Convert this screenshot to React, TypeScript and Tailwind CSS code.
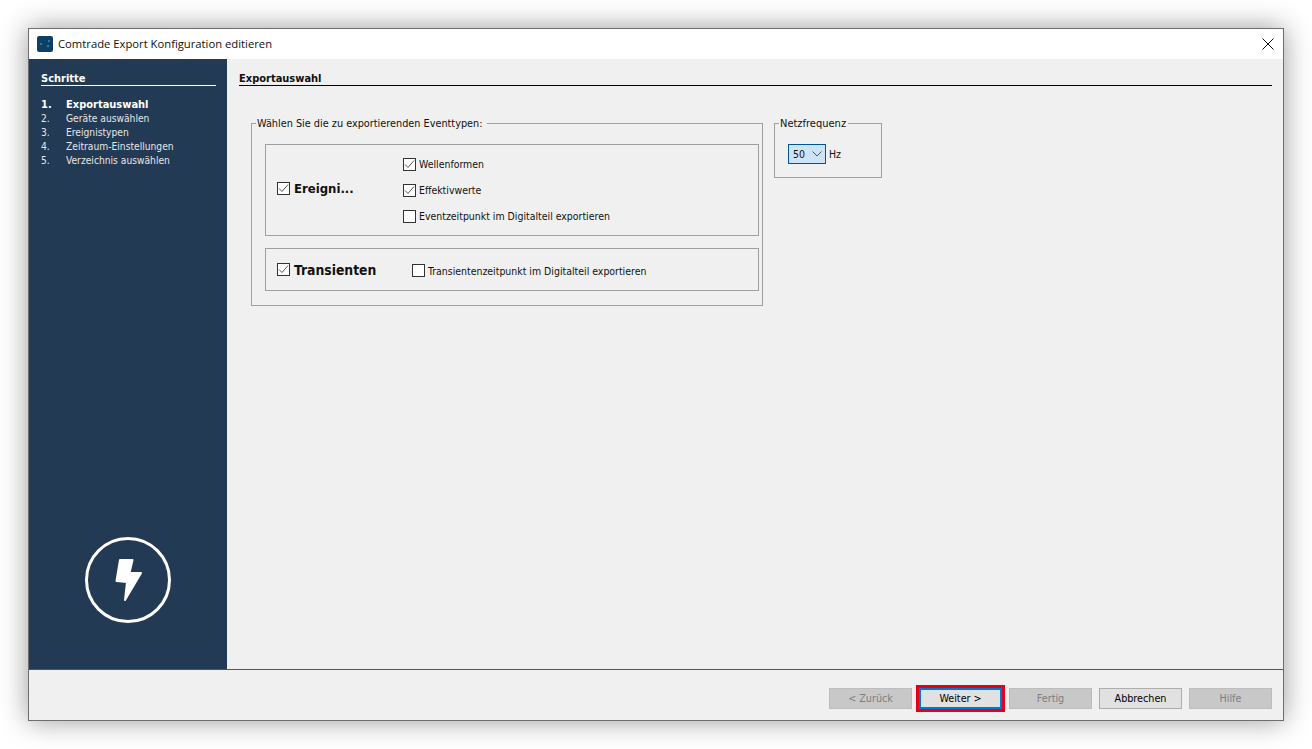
const Check = ({ checked, className = "" }: { checked?: boolean; className?: string }) => (
  <span className={"flex h-[13px] w-[13px] shrink-0 items-center justify-center border border-[#333] bg-white " + className}>
    {checked && (
      <svg width="11" height="11" viewBox="0 0 11 11" fill="none">
        <path d="M1 5.5 L4 8.5 L10 1.5" stroke="#555" strokeWidth="1" />
      </svg>
    )}
  </span>
);

const Option = ({ label, checked, className = "" }: { label: string; checked?: boolean; className?: string }) => (
  <label className={"flex h-[14px] items-center gap-[3px] " + className}>
    <Check checked={checked} />
    <span>{label}</span>
  </label>
);

const steps = ["Exportauswahl", "Geräte auswählen", "Ereignistypen", "Zeitraum-Einstellungen", "Verzeichnis auswählen"];

const NavButton = ({ label, disabled }: { label: string; disabled?: boolean }) => (
  <button
    className={
      "h-[21px] w-[83px] border " +
      (disabled ? "border-[#bdbdbd] bg-[#c8c8c8] text-[#7e7e7e]" : "border-[#adadad] bg-[#e1e1e1] text-black")
    }
  >
    {label}
  </button>
);

const App = () => {
  return (
    <div className="h-[749px] w-[1312px] overflow-hidden bg-white pl-[28px] pt-[28px] font-['DejaVu_Sans',sans-serif] text-[10.45px] leading-[14px] text-[#111] [font-stretch:condensed]">
      <div className="flex h-[693px] w-[1256px] flex-col border border-[#6e6e6e] bg-[#f0f0f0] shadow-[0_0_26px_rgba(0,0,0,0.4)]">
        <div className="flex h-[30px] shrink-0 items-center bg-white pl-[8px] pr-[9px]">
          <svg width="16" height="16" viewBox="0 0 16 16" className="mr-[5px]">
            <rect width="16" height="16" rx="2" fill="#0f3f63" />
            <circle cx="4" cy="8" r="1" fill="#2f8fc4" />
            <circle cx="12" cy="5" r="1" fill="#2f8fc4" />
            <circle cx="11" cy="10" r="1" fill="#2f8fc4" />
          </svg>
          <span className="font-['Open_Sans',sans-serif] text-[11.25px] text-[#111] [font-stretch:normal]">Comtrade Export Konfiguration editieren</span>
          <svg width="12" height="12" viewBox="0 0 12 12" className="ml-auto" fill="none">
            <path d="M0.5 0.5 L11.5 11.5 M11.5 0.5 L0.5 11.5" stroke="#111" strokeWidth="1" />
          </svg>
        </div>

        <div className="flex min-h-0 flex-1">
          <aside className="flex w-[198px] shrink-0 flex-col bg-[#233a54] pl-[12px] pr-[11px] pt-[12px] text-[10.2px] text-[#e6e6e6]">
            <div className="h-[15px] border-b border-white pt-px text-[11px] font-bold leading-[13px] text-white">Schritte</div>
            <ol className="mt-[12px]">
              {steps.map((step, i) => (
                <li key={step} className={"flex h-[14px] " + (i === 0 ? "text-[11px] font-bold text-white" : "")}>
                  <span className="w-[25px]">{i + 1}.</span>
                  <span>{step}</span>
                </li>
              ))}
            </ol>
            <svg width="88" height="88" viewBox="0 0 88 88" className="mb-[45px] ml-[43px] mt-auto" fill="none">
              <circle cx="44" cy="44" r="41.5" stroke="white" strokeWidth="3" />
              <path d="M36 24 L48.5 24 L45.5 37 L57 37 L41 64 L43 46 L32.5 45 Z" fill="white" stroke="white" strokeWidth="2" strokeLinejoin="round" />
            </svg>
          </aside>

          <main className="min-w-0 flex-1 pl-[12px] pr-[11px] pt-[12px]">
            <div className="h-[15px] border-b border-black pt-px text-[11px] font-bold leading-[13px]">Exportauswahl</div>
            <div className="ml-[12px] mt-[29px] flex items-start gap-[11px]">
              <fieldset className="h-[191px] w-[512px] border border-[#a0a0a0] pl-[13px] pr-[3px]">
                <legend className="-ml-[9px] pl-px pr-[4px] pt-[2px] text-[10.8px]">Wählen Sie die zu exportierenden Eventtypen:</legend>
                <div className="mt-[13px] flex h-[92px] items-center border border-[#a0a0a0] pl-[11px]">
                  <div className="mb-[3px] flex items-center">
                    <Check checked />
                    <span className="ml-[4px] w-[109px] text-[13px] font-bold">Ereigni...</span>
                  </div>
                  <div className="flex flex-col gap-[12px]">
                    <Option label="Wellenformen" checked />
                    <Option label="Effektivwerte" checked />
                    <Option label="Eventzeitpunkt im Digitalteil exportieren" />
                  </div>
                </div>
                <div className="mt-[12px] flex h-[43px] items-center border border-[#a0a0a0] pl-[11px]">
                  <Check checked />
                  <span className="ml-[4px] w-[118px] text-[13.8px] font-bold">Transienten</span>
                  <Option label="Transientenzeitpunkt im Digitalteil exportieren" className="mt-[2px]" />
                </div>
              </fieldset>

              <fieldset className="h-[63px] w-[108px] border border-[#a0a0a0] pl-[13px]">
                <legend className="-ml-[9px] pl-px pr-[2px] pt-[2px] text-[11px]">Netzfrequenz</legend>
                <div className="mt-[13px] flex items-center">
                  <div className="flex h-[20px] w-[38px] items-center justify-between border border-[#005499] bg-[#cce4f7] pl-[4px] pr-[3px]">
                    50
                    <svg width="10" height="6" viewBox="0 0 10 6" fill="none">
                      <path d="M0.5 0.5 L5 5 L9.5 0.5" stroke="#555" strokeWidth="1" />
                    </svg>
                  </div>
                  <span className="ml-[3px]">Hz</span>
                </div>
              </fieldset>
            </div>
          </main>
        </div>

        <div className="flex h-[51px] shrink-0 items-start justify-end gap-[7px] border-t border-[#555] pr-[11px] pt-[18px] text-[10.7px]">
          <NavButton label="< Zurück" disabled />
          <button className="h-[21px] w-[83px] border-2 border-[#0078d7] bg-[#e1e1e1] text-black outline-[3px] outline-[#e8000f]">Weiter &gt;</button>
          <NavButton label="Fertig" disabled />
          <NavButton label="Abbrechen" />
          <NavButton label="Hilfe" disabled />
        </div>
      </div>
    </div>
  );
};

export default App;
